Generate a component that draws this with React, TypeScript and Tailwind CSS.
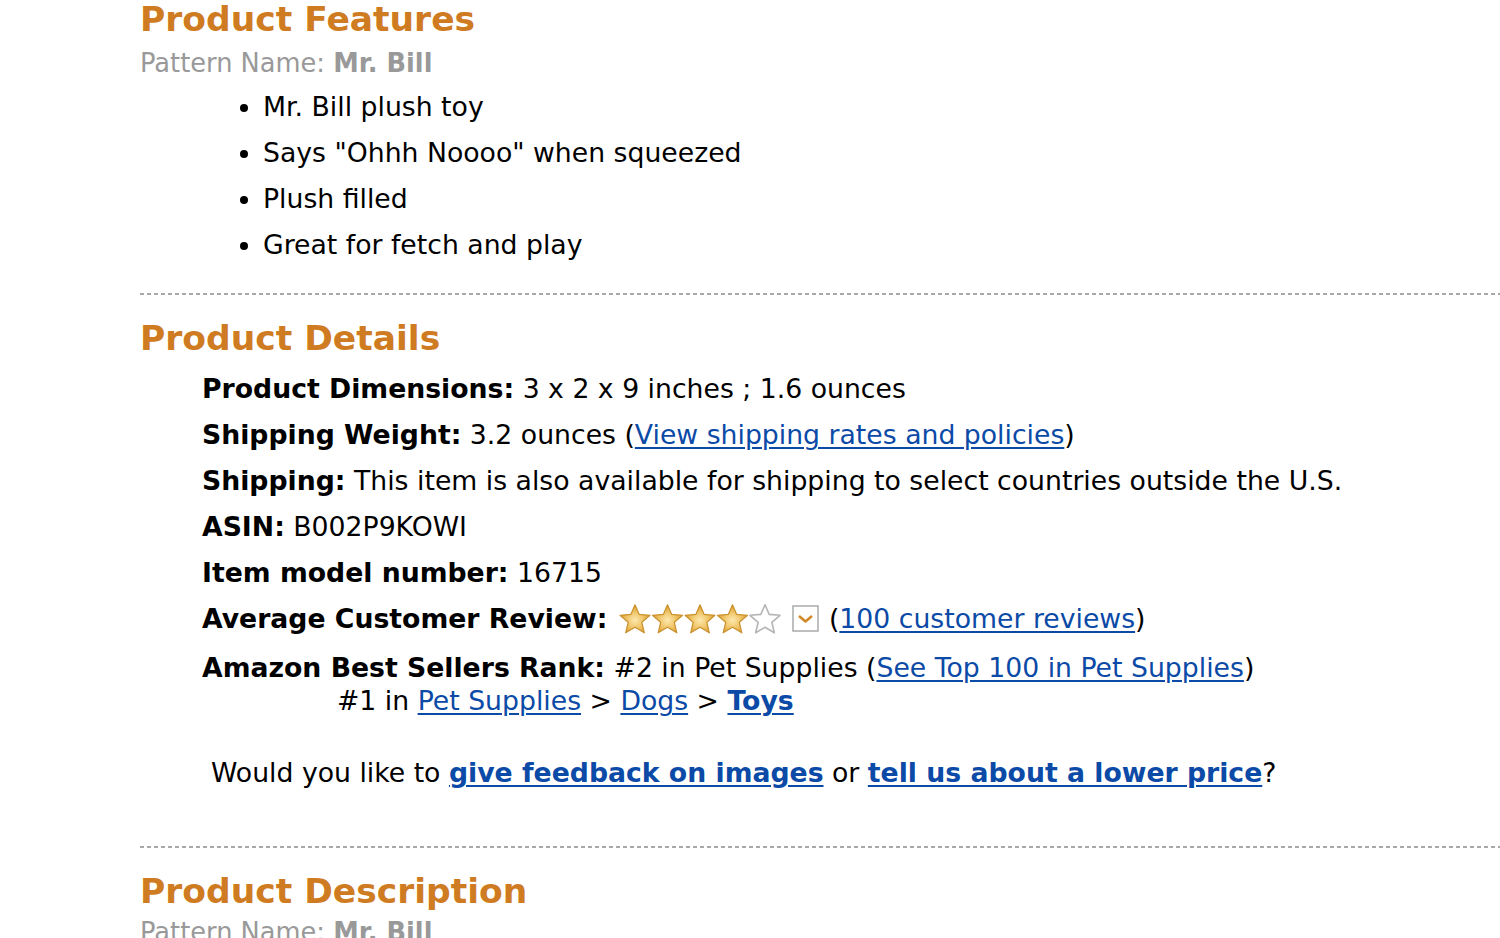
import React from "react";

const STAR = "M16 0.8 L20.2 10.4 L31 11.3 L22.85 18.3 L25.3 28.8 L16 23.3 L6.7 28.8 L9.15 18.3 L1 11.3 L11.8 10.4 Z";

const Star = ({ filled, x }: { filled: boolean; x: number }) => (
  <g transform={`translate(${x},0)`}>
    <path
      d={STAR}
      fill={filled ? "url(#gold)" : "#fff"}
      stroke={filled ? "#c9912c" : "#b5b5b5"}
      strokeWidth={filled ? 1.2 : 1.6}
      strokeLinejoin="round"
    />
  </g>
);

const Stars = () => (
  <svg width="162" height="30" viewBox="0 0 162 30" className="inline-block align-middle -mt-[4px] ml-[3px]">
    <defs>
      <radialGradient id="gold" cx="50%" cy="55%" r="55%">
        <stop offset="0%" stopColor="#fde8ae" />
        <stop offset="55%" stopColor="#efc365" />
        <stop offset="100%" stopColor="#d8982f" />
      </radialGradient>
    </defs>
    <Star filled x={0} />
    <Star filled x={32.5} />
    <Star filled x={65} />
    <Star filled x={97.5} />
    <Star filled={false} x={130} />
  </svg>
);

const Dropdown = () => (
  <svg width="27" height="27" viewBox="0 0 27 27" className="inline-block align-middle ml-[11px] mr-[10px] -mt-[4px]">
    <rect x="1" y="1" width="25" height="25" fill="#fff" stroke="#aaa" strokeWidth="1.5" />
    <path d="M7 11 L13.5 16.5 L20 11" fill="none" stroke="#d08a2a" strokeWidth="2.6" strokeLinejoin="round" />
  </svg>
);

const Hr = () => (
  <div className="h-[2px] w-full bg-[repeating-linear-gradient(to_right,#a8a8a8_0px,#a8a8a8_4px,transparent_4px,transparent_7px)]" />
);

const A = ({ children, bold }: { children: React.ReactNode; bold?: boolean }) => (
  <a href="#" className={`text-[#0b4aa6] underline underline-offset-[3px] decoration-[1.5px] ${bold ? "font-bold" : ""}`}>
    {children}
  </a>
);

export default function App() {
  return (
    <div className="w-[1500px] h-[938px] overflow-hidden bg-white text-black font-['DejaVu_Sans','Verdana',sans-serif]">
      <div className="pl-[140px]">
        <h2 className="text-[34.5px] leading-[38px] font-bold text-[#cf7b22]">Product Features</h2>
        <div className="mt-[10px] text-[25.7px] leading-[30px] text-[#999]">
          Pattern Name: <b>Mr. Bill</b>
        </div>
        <ul className="mt-[6px] pl-[123px] list-disc text-[26.7px] leading-[46px]">
          <li>Mr. Bill plush toy</li>
          <li>Says "Ohhh Noooo" when squeezed</li>
          <li>Plush filled</li>
          <li>Great for fetch and play</li>
        </ul>
        <div className="mt-[25px]">
          <Hr />
        </div>
        <h2 className="mt-[24px] text-[34.5px] leading-[38px] font-bold text-[#cf7b22]">Product Details</h2>
        <ul className="mt-[15px] pl-[62px] text-[26.7px] leading-[33px]">
          <li className="mb-[13px]">
            <b>Product Dimensions:</b> 3 x 2 x 9 inches ; 1.6 ounces
          </li>
          <li className="mb-[13px]">
            <b>Shipping Weight:</b> 3.2 ounces (<A>View shipping rates and policies</A>)
          </li>
          <li className="mb-[13px]">
            <b>Shipping:</b> This item is also available for shipping to select countries outside the U.S.
          </li>
          <li className="mb-[13px]">
            <b>ASIN:</b> B002P9KOWI
          </li>
          <li className="mb-[13px]">
            <b>Item model number:</b> 16715
          </li>
          <li className="mb-[16px]">
            <b>Average Customer Review:</b> <Stars />
            <Dropdown />(<A>100 customer reviews</A>)
          </li>
          <li>
            <b>Amazon Best Sellers Rank:</b> #2 in Pet Supplies (<A>See Top 100 in Pet Supplies</A>)
            <div className="pl-[135px]">
              #1 in <A>Pet Supplies</A> &gt; <A>Dogs</A> &gt; <A bold>Toys</A>
            </div>
          </li>
        </ul>
        <div className="mt-[39px] pl-[71px] text-[26.7px] leading-[33px]">
          Would you like to <A bold>give feedback on images</A> or <A bold>tell us about a lower price</A>?
        </div>
        <div className="mt-[57px]">
          <Hr />
        </div>
        <h2 className="mt-[24px] text-[34.5px] leading-[38px] font-bold text-[#cf7b22]">Product Description</h2>
        <div className="mt-[7px] text-[25.7px] leading-[30px] text-[#999]">
          Pattern Name: <b>Mr. Bill</b>
        </div>
      </div>
    </div>
  );
}
